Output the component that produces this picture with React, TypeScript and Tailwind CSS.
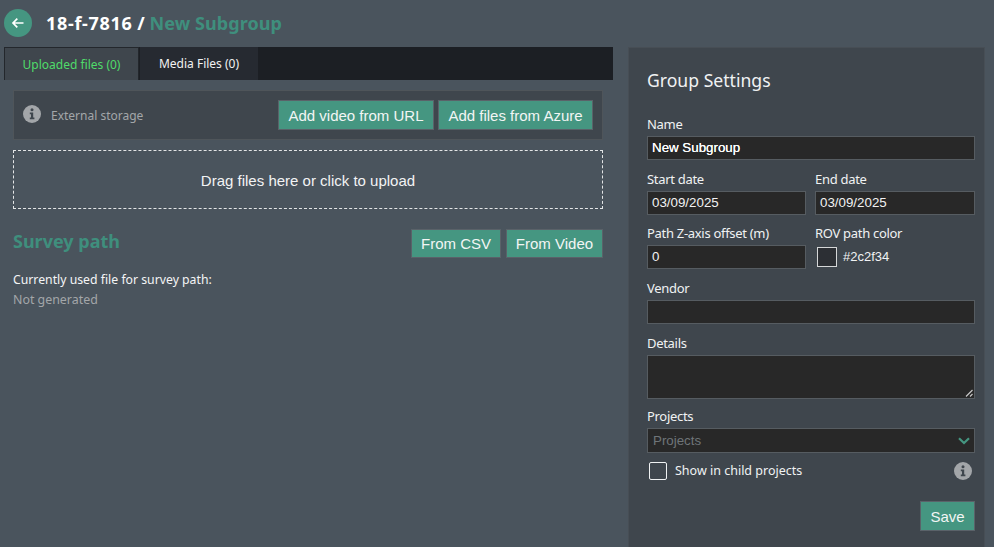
import React from "react";

const sans = "font-['Noto_Sans',sans-serif]";
const arial = "font-['Liberation_Sans',Arial,sans-serif]";

function InfoIcon({ className = "" }: { className?: string }) {
  return (
    <svg viewBox="0 0 18 18" className={className}>
      <circle cx="9" cy="9" r="9" fill="#a3a6a9" />
      <circle cx="9" cy="4.8" r="1.5" fill="#3f464d" />
      <path d="M6.8 7.6h3.4v5h1.2v1.6H6.8v-1.6H8v-3.4H6.8z" fill="#3f464d" />
    </svg>
  );
}

function Btn({ children, className = "" }: { children: React.ReactNode; className?: string }) {
  return (
    <button className={`${arial} border border-[#5a6269] bg-[#459681] text-center text-[15px] leading-none text-[#f2f5f4] ${className}`}>
      {children}
    </button>
  );
}

function Field({ label, children, className = "" }: { label: string; children: React.ReactNode; className?: string }) {
  return (
    <div className={`flex flex-col ${className}`}>
      <label className="mb-[3px] h-[18px] text-[13px] leading-[18px] tracking-[-0.3px] text-[#f0f2f3]">{label}</label>
      {children}
    </div>
  );
}

function TextBox({ value = "", strong = false }: { value?: string; strong?: boolean }) {
  return (
    <div className={`${arial} flex h-[24px] items-center border border-[#565c61] bg-[#282828] px-[3px] pl-[4px] text-[13.33px] ${strong ? "text-white [text-shadow:0_0_0.5px_#ffffff]" : "text-[#f2f2f2]"}`}>
      {value}
    </div>
  );
}

export default function App() {
  return (
    <div className={`${sans} flex h-[547px] w-[994px] flex-col overflow-hidden bg-[#4a545d] text-white`}>
      <header className="flex h-[47px] shrink-0 items-center pb-[1px] pl-[4px]">
        <div className="flex h-[28px] w-[28px] items-center justify-center rounded-full bg-[#459681]">
          <svg viewBox="0 0 14 14" className="h-[14px] w-[14px]" fill="none" stroke="#fff" strokeWidth="1.7">
            <path d="M12.5 7H2M6.3 2.7 2 7l4.3 4.3" />
          </svg>
        </div>
        <h1 className="ml-[14px] text-[18px] font-bold leading-none">
          <span className="tracking-[0.7px]">18-f-7816</span> / <span className="text-[#3f8f7d] tracking-[0.1px]">New Subgroup</span>
        </h1>
      </header>

      <div className="flex min-h-0 flex-1 pl-[4px]">
        <main className="w-[609px] shrink-0">
          <div className="flex h-[33px] bg-[#1c1f24] text-[12px]">
            <div className="flex w-[135px] items-center justify-center border-x border-t border-[#23272c] bg-[#3f464d] pt-[1px] text-[#4fdc6a]">
              Uploaded files (0)
            </div>
            <div className="ml-[1px] flex w-[118px] items-center justify-center bg-[#262a31] pt-[1px] text-[#f2f2f2]">
              Media Files (0)
            </div>
          </div>

          <div className="mr-[10px] ml-[9px] mt-[10px]">
            <div className="flex h-[50px] items-center border border-[#4f555a] bg-[#3f464d] px-[9px]">
              <InfoIcon className="mb-[3px] h-[18px] w-[18px]" />
              <span className="ml-[10px] pt-[2px] text-[12px] text-[#a3a6a9]">External storage</span>
              <div className="ml-auto flex gap-[4px]">
                <Btn className="h-[30px] w-[156px]">Add video from URL</Btn>
                <Btn className="h-[30px] w-[155px]">Add files from Azure</Btn>
              </div>
            </div>

            <div className={`${arial} mt-[10px] flex h-[59px] items-center justify-center border border-dashed border-[#e4e6e7] pt-[3px] text-[15px] text-[#f2f3f4]`}>
              Drag files here or click to upload
            </div>

            <div className="mt-[20px] flex items-start justify-between">
              <h2 className="text-[18px] font-bold leading-[24px] text-[#3f8f7d]">Survey path</h2>
              <div className="flex gap-[5px]">
                <Btn className="h-[29px] w-[90px]">From CSV</Btn>
                <Btn className="h-[29px] w-[97px]">From Video</Btn>
              </div>
            </div>

            <p className="mt-[13px] text-[12.25px] leading-[18px] text-[#f4f5f6]">Currently used file for survey path:</p>
            <p className="mt-[2px] text-[12.4px] leading-[18px] text-[#a3a6a9]">Not generated</p>
          </div>
        </main>

        <aside className="ml-[15px] w-[357px] shrink-0 border-x border-t border-[#474e55] bg-[#3f464d] pl-[18px] pr-[9px] pt-[19px]">
          <h3 className="text-[17.6px] leading-[26px] text-[#f0f2f3]">Group Settings</h3>

          <Field label="Name" className="mt-[22px]">
            <TextBox value="New Subgroup" strong />
          </Field>

          <div className="mt-[10px] grid grid-cols-[159px_160px] gap-x-[9px]">
            <Field label="Start date"><TextBox value="03/09/2025" /></Field>
            <Field label="End date"><TextBox value="03/09/2025" /></Field>
          </div>

          <div className="mt-[9px] grid grid-cols-[159px_160px] gap-x-[9px]">
            <Field label="Path Z-axis offset (m)"><TextBox value="0" /></Field>
            <Field label="ROV path color">
              <div className="flex h-[24px] items-center pl-[2px]">
                <div className="h-[20px] w-[20px] border border-[#d5d7d8] bg-[#2c2f34]" />
                <span className={`${arial} ml-[6px] text-[13px] text-[#f0f2f3]`}>#2c2f34</span>
              </div>
            </Field>
          </div>

          <Field label="Vendor" className="mt-[10px]"><TextBox /></Field>

          <Field label="Details" className="mt-[10px]">
            <div className="relative h-[44px] border border-[#565c61] bg-[#282828]">
              <svg viewBox="0 0 8 8" className="absolute bottom-[1px] right-[1px] h-[8px] w-[8px]" stroke="#c8c8c8" strokeWidth="1.2">
                <path d="M1 7.5 7.5 1M5 7.5 7.5 5" />
              </svg>
            </div>
          </Field>

          <Field label="Projects" className="mt-[8px]">
            <div className={`${arial} flex h-[25px] items-center justify-between border border-[#565c61] bg-[#282828] pl-[5px] pr-[4px] text-[13.33px] text-[#6f7579]`}>
              Projects
              <svg viewBox="0 0 12 8" className="h-[8px] w-[12px]" fill="none" stroke="#459681" strokeWidth="2.2">
                <path d="M1 1.2 6 6l5-4.8" />
              </svg>
            </div>
          </Field>

          <div className="mt-[9px] flex h-[18px] items-center pl-[2px]">
            <div className="h-[18px] w-[18px] rounded-[2px] border border-[#f0f2f3]" />
            <span className="ml-[8px] pt-[1px] text-[12.5px] text-[#f0f2f3]">Show in child projects</span>
            <InfoIcon className="ml-auto mr-[3px] h-[18px] w-[18px]" />
          </div>

          <div className="mt-[21px] flex justify-end">
            <Btn className="h-[30px] w-[55px]">Save</Btn>
          </div>
        </aside>
      </div>
    </div>
  );
}
